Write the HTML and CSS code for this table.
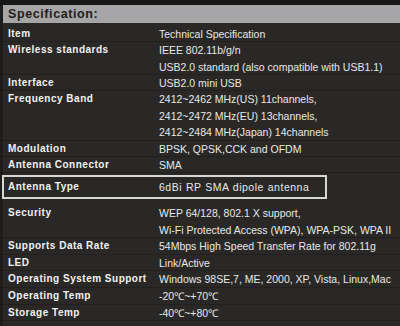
FILE: index.html
```html
<!DOCTYPE html>
<html>
<head>
<meta charset="utf-8">
<link rel="stylesheet" href="styles.css">
</head>
<body>
<div class="page">
  <div class="head"><h1 class="title">Specification:</h1></div>
  <div class="table">
    <div class="sec sec-a">
      <div class="row"><div class="k">Item</div><div class="v">Technical Specification</div></div>
      <div class="row"><div class="k">Wireless standards</div><div class="v">IEEE 802.11b/g/n<br>USB2.0 standard (also compatible with USB1.1)</div></div>
      <div class="row"><div class="k">Interface</div><div class="v">USB2.0 mini USB</div></div>
      <div class="row"><div class="k">Frequency Band</div><div class="v">2412~2462 MHz(US) 11channels,<br>2412~2472 MHz(EU) 13channels,<br>2412~2484 MHz(Japan) 14channels</div></div>
      <div class="row"><div class="k">Modulation</div><div class="v">BPSK, QPSK,CCK and OFDM</div></div>
      <div class="row"><div class="k">Antenna Connector</div><div class="v">SMA</div></div>
    </div>
    <div class="row boxed"><div class="k">Antenna Type</div><div class="v wide">6dBi RP SMA dipole antenna</div></div>
    <div class="sec sec-b">
      <div class="row"><div class="k">Security</div><div class="v">WEP 64/128, 802.1 X support,<br>Wi-Fi Protected Access (WPA), WPA-PSK, WPA II</div></div>
      <div class="row"><div class="k">Supports Data Rate</div><div class="v">54Mbps High Speed Transfer Rate for 802.11g</div></div>
      <div class="row"><div class="k">LED</div><div class="v">Link/Active</div></div>
      <div class="row"><div class="k">Operating System Support</div><div class="v">Windows 98SE,7, ME, 2000, XP, Vista, Linux,Mac</div></div>
      <div class="row"><div class="k">Operating Temp</div><div class="v">-20℃~+70℃</div></div>
      <div class="row"><div class="k">Storage Temp</div><div class="v">-40℃~+80℃</div></div>
    </div>
  </div>
</div>
</body>
</html>
```
FILE: styles.css
```css
html, body {
  margin: 0;
  padding: 0;
  background: #1c1b1a;
}
.page {
  width: 400px;
  height: 326px;
  overflow: hidden;
  background: #292826;
  font-family: "Liberation Sans", Arial, sans-serif;
  padding-top: 5px;
  box-sizing: border-box;
  box-shadow: inset 0 5px 0 #181716, inset 3px 0 0 #1e1d1c;
}
.head {
  margin-left: 3px;
  height: 18px;
  background: #a6a5a7;
  display: flex;
  align-items: center;
  padding-left: 5px;
}
.title {
  margin: 0;
  font-size: 12.5px;
  font-weight: bold;
  letter-spacing: 0.6px;
  color: #1f1e1e;
}
.table {
  padding-top: 2.8px;
}
.row {
  display: grid;
  grid-template-columns: 151px 1fr;
  padding-left: 8px;
  box-shadow: inset 0 -1px 0 rgba(0, 0, 0, 0.18);
}
.sec-a .row { line-height: 16.4px; }
.sec-b { margin-top: 6.2px; }
.sec-b .row { line-height: 16.6px; }
.k {
  font-size: 10px;
  font-weight: bold;
  letter-spacing: 0.5px;
  color: #f2f2f0;
  white-space: nowrap;
}
.v {
  font-size: 10.5px;
  color: #e8e8e6;
  white-space: nowrap;
}
.boxed {
  margin: 1.4px 73px 0 2px;
  border: 2px solid #d6d6d4;
  height: 24px;
  box-sizing: border-box;
  line-height: 20px;
  padding-left: 4px;
  box-shadow: none;
}
.wide {
  letter-spacing: 0.5px;
  word-spacing: 0.5px;
}
```
